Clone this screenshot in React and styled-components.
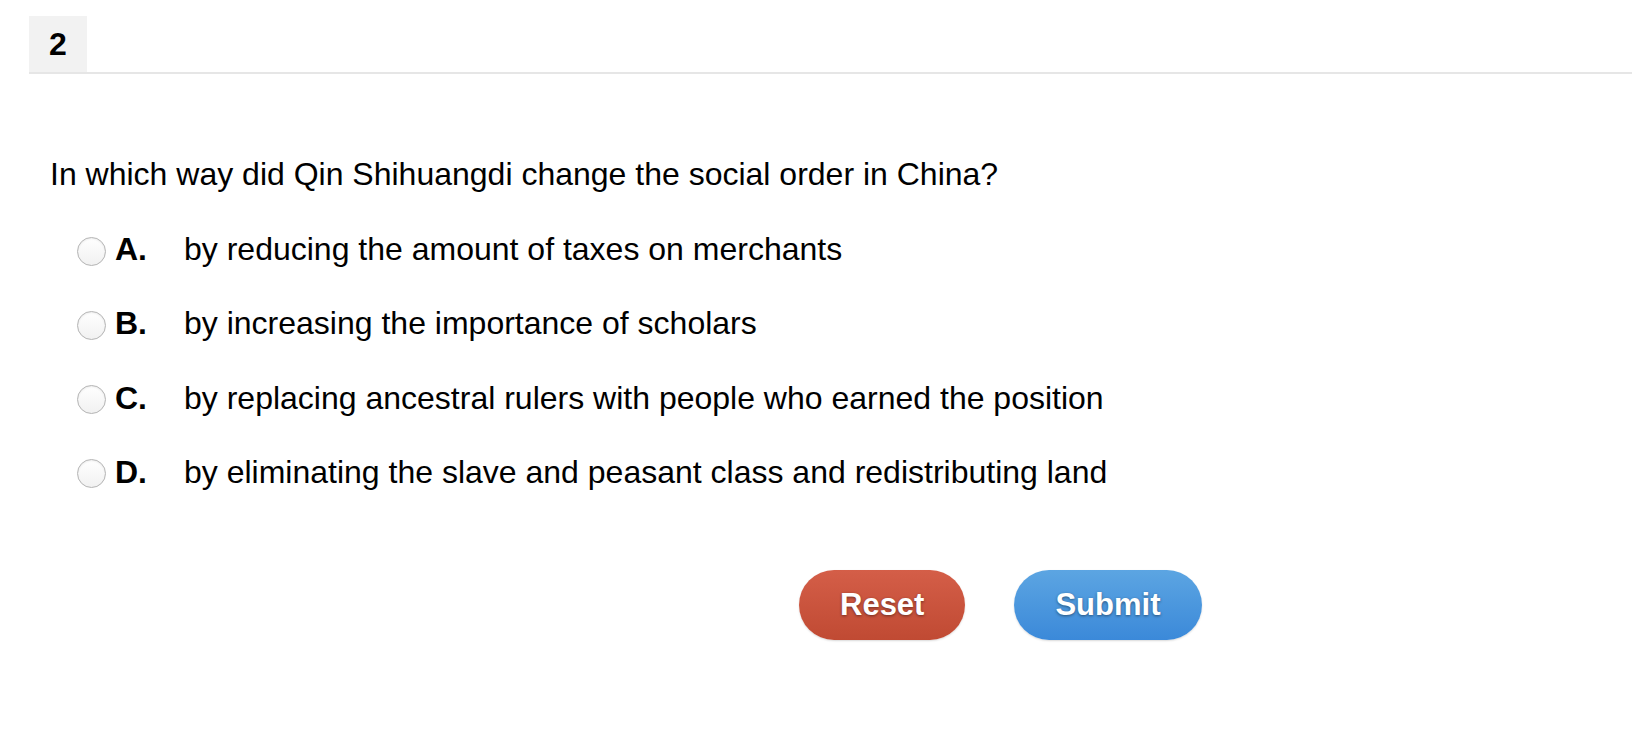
import React from 'react'
import styled, { createGlobalStyle } from 'styled-components'

const Global = createGlobalStyle`
    body{
        margin: 0;
        background: #ffffff;
        font-family: "Liberation Sans", Arial, sans-serif;
        color: #000;
    }
`

const options = [
    { key: 'A', text: 'by reducing the amount of taxes on merchants' },
    { key: 'B', text: 'by increasing the importance of scholars' },
    { key: 'C', text: 'by replacing ancestral rulers with people who earned the position' },
    { key: 'D', text: 'by eliminating the slave and peasant class and redistributing land' },
]

export default function App() {
    return (
        <Page>
            <Global/>
            <Header>
                <Number>2</Number>
            </Header>
            <Question>In which way did Qin Shihuangdi change the social order in China?</Question>
            <List>
                {
                    options.map(o=>(
                        <Row key={o.key}>
                            <Radio/>
                            <Letter>{o.key}.</Letter>
                            <Answer>{o.text}</Answer>
                        </Row>
                    ))
                }
            </List>
            <Actions>
                <Button $tone="red">Reset</Button>
                <Button $tone="blue">Submit</Button>
            </Actions>
        </Page>
    )
}

const Page = styled.div`
    width: 100%;
    padding-top: 16px;
    padding-bottom: 60px;
`

const Header = styled.div`
    margin-left: 29px;
    display: flex;
    border-bottom: 2px solid #e6e6e6;
`

const Number = styled.div`
    width: 58px;
    height: 56px;
    background: #f2f2f2;
    display: flex;
    align-items: center;
    justify-content: center;
    font-weight: bold;
    font-size: 32px;
`

const Question = styled.div`
    margin: 82px 0 0 50px;
    font-size: 32px;
    line-height: 37px;
`

const List = styled.div`
    margin: 38px 0 0 77px;
    display: flex;
    flex-direction: column;
    gap: 37.3px;
`

const Row = styled.div`
    display: flex;
    align-items: center;
    font-size: 32px;
    line-height: 37px;
`

const Radio = styled.span`
    width: 27px;
    height: 27px;
    border-radius: 50%;
    border: 1px solid #b4b4b4;
    background: linear-gradient(#ffffff, #f1f1f1);
    box-shadow: inset 0 1px 2px rgba(0,0,0,0.08);
    margin-top: 3px;
`

const Letter = styled.span`
    font-weight: bold;
    width: 69px;
    margin-left: 9px;
`

const Answer = styled.span``

const Button = styled.button`
    height: 70px;
    padding: 0 41px;
    border: none;
    border-radius: 35px;
    font-family: "Liberation Sans", Arial, sans-serif;
    font-weight: bold;
    font-size: 31px;
    color: #fff;
    text-shadow: 0 1px 3px rgba(0,0,0,0.45);
    background: ${p => p.$tone === 'red'
        ? 'linear-gradient(#d45e48, #c04a33)'
        : 'linear-gradient(#5ca5e2, #3b89d9)'};
    box-shadow: 0 1px 2px rgba(0,0,0,0.15);
`

const Actions = styled.div`
    margin: 79px 0 0 799px;
    display: flex;
    gap: 49px;
`
